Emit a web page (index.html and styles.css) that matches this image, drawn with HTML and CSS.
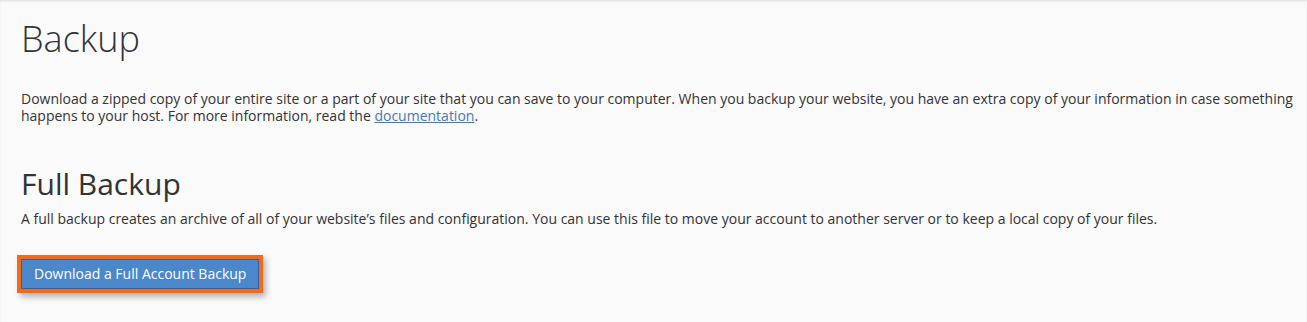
FILE: index.html
```html
<!DOCTYPE html>
<html lang="en">
<head>
<meta charset="utf-8">
<title>Backup</title>
<link rel="stylesheet" href="styles.css">
</head>
<body>
<main class="page">
  <h1 class="page-title">Backup</h1>
  <p class="intro">Download a zipped copy of your entire site or a part of your site that you can save to your computer. When you backup your website, you have an extra copy of your information in case something happens to your host. For more information, read the <a class="link" href="#">documentation</a>.</p>
  <section class="section">
    <h2 class="section-title">Full Backup</h2>
    <p class="section-text">A full backup creates an archive of all of your website’s files and configuration. You can use this file to move your account to another server or to keep a local copy of your files.</p>
    <div class="actions">
      <button class="btn-primary" type="button">Download a Full Account Backup</button>
    </div>
  </section>
</main>
</body>
</html>
```

FILE: styles.css
```css
html, body {
  margin: 0;
  padding: 0;
  background: #fafafa;
}
body {
  font-family: "Open Sans", "Liberation Sans", sans-serif;
  color: #333;
  width: 1307px;
  height: 322px;
  overflow: hidden;
  box-shadow: inset 0 2px 3px -1px rgba(0,0,0,0.12);
}
.page {
  padding: 19px 10px 0 21px;
}
.page-title {
  margin: 0;
  font-size: 36px;
  font-weight: 300;
  line-height: 40px;
  color: #333;
}
.intro {
  margin: 31px 0 0;
  font-size: 14px;
  line-height: 17px;
}
.link {
  color: #4a77b4;
  text-decoration: underline;
}
.section {
  margin-top: 43px;
}
.section-title {
  margin: 0;
  font-size: 30px;
  font-weight: 400;
  line-height: 33px;
  color: #333;
}
.section-text {
  margin: 10px 0 0;
  font-size: 14px;
  line-height: 17px;
}
.actions {
  margin-top: 32px;
  display: flex;
}
.btn-primary {
  margin-left: 0;
  font-family: "Open Sans", "Liberation Sans", sans-serif;
  font-size: 14px;
  line-height: 20px;
  padding: 4px 12px;
  color: #fff;
  background: #4a87cb;
  border: 1px solid #2f639f;
  border-radius: 0;
  box-shadow: 0 0 0 4px #f26b1d, 3px 4px 6px 4px rgba(0,0,0,0.28);
  cursor: pointer;
}
```
